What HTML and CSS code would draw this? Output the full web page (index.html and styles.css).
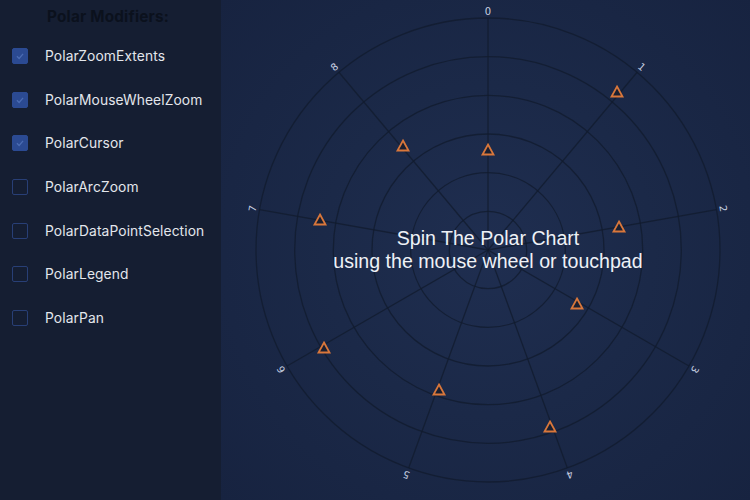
FILE: index.html
```html
<!DOCTYPE html>
<html>
<head>
<meta charset="utf-8">
<link rel="stylesheet" href="styles.css">
</head>
<body>
<div class="app">
  <aside class="panel">
    <h2 class="title">Polar Modifiers:</h2>
    <ul class="mods">
      <li class="mod"><span class="box on"><svg viewBox="0 0 16 16" width="16" height="16"><path d="M4.5 8.3 L7 10.8 L11.5 5.6" fill="none" stroke="#4b6cb3" stroke-width="1.5"/></svg></span><span class="name">PolarZoomExtents</span></li>
      <li class="mod"><span class="box on"><svg viewBox="0 0 16 16" width="16" height="16"><path d="M4.5 8.3 L7 10.8 L11.5 5.6" fill="none" stroke="#4b6cb3" stroke-width="1.5"/></svg></span><span class="name">PolarMouseWheelZoom</span></li>
      <li class="mod"><span class="box on"><svg viewBox="0 0 16 16" width="16" height="16"><path d="M4.5 8.3 L7 10.8 L11.5 5.6" fill="none" stroke="#4b6cb3" stroke-width="1.5"/></svg></span><span class="name">PolarCursor</span></li>
      <li class="mod"><span class="box"></span><span class="name">PolarArcZoom</span></li>
      <li class="mod"><span class="box"></span><span class="name">PolarDataPointSelection</span></li>
      <li class="mod"><span class="box"></span><span class="name">PolarLegend</span></li>
      <li class="mod"><span class="box"></span><span class="name">PolarPan</span></li>
    </ul>
  </aside>
  <main class="chart">
    <svg class="plot" width="529" height="500" viewBox="0 0 529 500">
      <g transform="translate(267,250)" fill="none" stroke="#121b2e" stroke-opacity="0.8" stroke-width="1.3">
        <circle r="38.7"/>
        <circle r="77.3"/>
        <circle r="116"/>
        <circle r="154.7"/>
        <circle r="193.3"/>
        <circle r="232"/>
        <line x1="0" y1="0" x2="0" y2="-232" transform="rotate(0)"/>
        <line x1="0" y1="0" x2="0" y2="-232" transform="rotate(40)"/>
        <line x1="0" y1="0" x2="0" y2="-232" transform="rotate(80)"/>
        <line x1="0" y1="0" x2="0" y2="-232" transform="rotate(120)"/>
        <line x1="0" y1="0" x2="0" y2="-232" transform="rotate(160)"/>
        <line x1="0" y1="0" x2="0" y2="-232" transform="rotate(200)"/>
        <line x1="0" y1="0" x2="0" y2="-232" transform="rotate(240)"/>
        <line x1="0" y1="0" x2="0" y2="-232" transform="rotate(280)"/>
        <line x1="0" y1="0" x2="0" y2="-232" transform="rotate(320)"/>
      </g>
      <g transform="translate(267,250)" class="ticks">
        <text transform="rotate(0) translate(0,-239)">0</text>
        <text transform="rotate(40) translate(0,-239)">1</text>
        <text transform="rotate(80) translate(0,-239)">2</text>
        <text transform="rotate(120) translate(0,-239)">3</text>
        <text transform="rotate(160) translate(0,-239)">4</text>
        <text transform="rotate(200) translate(0,-239)">5</text>
        <text transform="rotate(240) translate(0,-239)">6</text>
        <text transform="rotate(280) translate(0,-239)">7</text>
        <text transform="rotate(320) translate(0,-239)">8</text>
      </g>
      <g class="pts" fill="#1a1f30" stroke="#d9773b" stroke-width="1.8" stroke-linejoin="miter">
        <polygon points="0,-5.5 5.5,4.5 -5.5,4.5" transform="translate(267,150)"/>
        <polygon points="0,-5.5 5.5,4.5 -5.5,4.5" transform="translate(396,92)"/>
        <polygon points="0,-5.5 5.5,4.5 -5.5,4.5" transform="translate(398,227)"/>
        <polygon points="0,-5.5 5.5,4.5 -5.5,4.5" transform="translate(356,304)"/>
        <polygon points="0,-5.5 5.5,4.5 -5.5,4.5" transform="translate(329,427)"/>
        <polygon points="0,-5.5 5.5,4.5 -5.5,4.5" transform="translate(218,390)"/>
        <polygon points="0,-5.5 5.5,4.5 -5.5,4.5" transform="translate(103,348)"/>
        <polygon points="0,-5.5 5.5,4.5 -5.5,4.5" transform="translate(99,220)"/>
        <polygon points="0,-5.5 5.5,4.5 -5.5,4.5" transform="translate(182,146)"/>
      </g>
    </svg>
    <div class="hint">
      <div>Spin The Polar Chart</div>
      <div>using the mouse wheel or touchpad</div>
    </div>
  </main>
</div>
</body>
</html>
```
FILE: styles.css
```css
html, body {
  margin: 0;
  padding: 0;
  width: 750px;
  height: 500px;
  overflow: hidden;
  background: #172139;
}
.app {
  display: flex;
  width: 750px;
  height: 500px;
}
.panel {
  width: 221px;
  flex: none;
  background: #151e32;
  font-family: "Inter", "Open Sans", sans-serif;
  box-sizing: border-box;
  padding-top: 7px;
}
.title {
  margin: 0 0 0 47px;
  height: 20px;
  line-height: 20px;
  font-size: 15.3px;
  font-weight: 700;
  color: #0b111d;
  letter-spacing: 0.2px;
}
.mods {
  list-style: none;
  margin: 19px 0 0 0;
  padding: 0;
  display: flex;
  flex-direction: column;
  gap: 23.67px;
}
.mod {
  display: flex;
  align-items: center;
  height: 20px;
  padding-left: 12px;
}
.box {
  width: 16px;
  height: 16px;
  box-sizing: border-box;
  border: 1.5px solid #283f76;
  border-radius: 2px;
  display: flex;
  align-items: center;
  justify-content: center;
  flex: none;
}
.box.on {
  background: #2b4a92;
  border-color: #2b4a92;
}
.box svg {
  display: block;
}
.name {
  margin-left: 17px;
  font-size: 13.8px;
  color: #e3e6ec;
  letter-spacing: 0.1px;
}
.chart {
  position: relative;
  flex: 1;
  height: 500px;
  background: radial-gradient(circle at 267px 250px, #1f2e50 0%, #1b2948 45%, #172340 100%);
}
.plot {
  display: block;
}
.ticks text {
  font-family: "DejaVu Sans", sans-serif;
  font-size: 10px;
  fill: #c8d0e0;
  text-anchor: middle;
  dominant-baseline: central;
}
.hint {
  position: absolute;
  left: 0;
  width: 534px;
  top: 227px;
  text-align: center;
  font-family: "Liberation Sans", Arial, sans-serif;
  font-size: 19.6px;
  line-height: 23px;
  color: #eef1f6;
}
```
